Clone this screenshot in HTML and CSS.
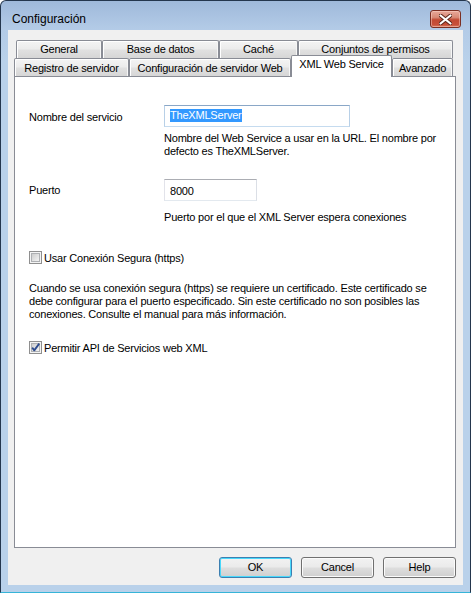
FILE: index.html
```html
<!DOCTYPE html>
<html lang="es">
<head>
<meta charset="utf-8">
<title>Configuración</title>
<link rel="stylesheet" href="styles.css">
</head>
<body>
<div class="window">
  <div class="titlebar">
    <span class="title">Configuración</span>
    <div class="close">
      <svg width="13" height="11" viewBox="0 0 13 11">
        <path d="M1.5 1.5 L11.5 9.5 M11.5 1.5 L1.5 9.5" stroke="#5a2418" stroke-width="4" stroke-linecap="round" fill="none"/>
        <path d="M1.5 1.5 L11.5 9.5 M11.5 1.5 L1.5 9.5" stroke="#ffffff" stroke-width="2.2" stroke-linecap="round" fill="none"/>
      </svg>
    </div>
  </div>
  <div class="client">
    <div class="tabs">
      <div class="tabrow back">
        <div class="tab t-general">General</div>
        <div class="tab t-base">Base de datos</div>
        <div class="tab t-cache">Caché</div>
        <div class="tab t-conj">Conjuntos de permisos</div>
      </div>
      <div class="tabrow front">
        <div class="tab t-reg">Registro de servidor</div>
        <div class="tab t-conf">Configuración de servidor Web</div>
        <div class="tab t-xml selected">XML Web Service</div>
        <div class="tab t-ava">Avanzado</div>
      </div>
    </div>
    <div class="panel">
      <div class="field f-name">
        <div class="label">Nombre del servicio</div>
        <div class="fcol">
          <div class="textbox focused tb-name"><span class="sel">TheXMLServer</span></div>
          <div class="desc d-name">Nombre del Web Service a usar en la URL. El nombre por<br>defecto es TheXMLServer.</div>
        </div>
      </div>
      <div class="field f-port">
        <div class="label">Puerto</div>
        <div class="fcol">
          <div class="textbox tb-port">8000</div>
          <div class="desc d-port">Puerto por el que el XML Server espera conexiones</div>
        </div>
      </div>
      <div class="check c-https">
        <svg class="cb" width="13" height="13" viewBox="0 0 13 13">
          <defs>
            <linearGradient id="cbg" x1="0" y1="0" x2="1" y2="1">
              <stop offset="0" stop-color="#cbcbcb"/>
              <stop offset="1" stop-color="#f6f6f6"/>
            </linearGradient>
          </defs>
          <rect x="0.5" y="0.5" width="12" height="12" fill="#f4f4f4" stroke="#8f8f8f"/>
          <rect x="2.5" y="2.5" width="8" height="8" fill="url(#cbg)" stroke="#aeb0b3"/>
        </svg>
        <span>Usar Conexión Segura (https)</span>
      </div>
      <p class="info">Cuando se usa conexión segura (https) se requiere un certificado. Este certificado se<br>debe configurar para el puerto especificado. Sin este certificado no son posibles las<br>conexiones. Consulte el manual para más información.</p>
      <div class="check c-api">
        <svg class="cb" width="13" height="13" viewBox="0 0 13 13">
          <defs>
            <linearGradient id="cbg2" x1="0" y1="0" x2="1" y2="1">
              <stop offset="0" stop-color="#cbcbcb"/>
              <stop offset="1" stop-color="#f6f6f6"/>
            </linearGradient>
          </defs>
          <rect x="0.5" y="0.5" width="12" height="12" fill="#f4f4f4" stroke="#8f8f8f"/>
          <rect x="2.5" y="2.5" width="8" height="8" fill="url(#cbg2)" stroke="#aeb0b3"/>
          <path d="M3.2 6.6 L5.3 9.4 L10.2 2.6" stroke="#2d4b8e" stroke-width="1.8" fill="none" stroke-linejoin="round"/>
        </svg>
        <span>Permitir API de Servicios web XML</span>
      </div>
    </div>
    <div class="buttons">
      <div class="btn default">OK</div>
      <div class="btn">Cancel</div>
      <div class="btn">Help</div>
    </div>
  </div>
</div>
</body>
</html>
```
FILE: styles.css
```css
* { box-sizing: border-box; }
html, body { margin: 0; padding: 0; }
body {
  width: 471px;
  height: 593px;
  overflow: hidden;
  background: #ffffff;
  font-family: "Liberation Sans", Arial, sans-serif;
  font-size: 11px;
  letter-spacing: -0.2px;
  color: #000000;
}
.window {
  width: 471px;
  height: 593px;
  border: 1px solid #24364d;
  border-bottom-color: #36b4d8;
  border-radius: 6px 6px 0 0;
  background: linear-gradient(to bottom, #9fb9da 0px, #b3cbe7 28px, #b9d1ea 60px, #b9d1ea 100%);
  padding: 0 7px 7px 7px;
  display: flex;
  flex-direction: column;
}
.titlebar {
  height: 29px;
  display: flex;
  align-items: flex-start;
  justify-content: space-between;
  padding-left: 4px;
}
.title {
  font-size: 12px;
  letter-spacing: 0;
  padding-top: 11px;
  line-height: 14px;
  color: #000;
}
.close {
  margin-top: 9px;
  margin-right: 2px;
  width: 31px;
  height: 18px;
  border: 1px solid #7b2f23;
  border-radius: 3px;
  background: linear-gradient(to bottom, #e8a899 0%, #d88a77 40%, #c24a33 55%, #c8503a 85%, #d87a5e 100%);
  box-shadow: inset 0 0 0 1px rgba(255,220,210,0.45);
  display: flex;
  align-items: center;
  justify-content: center;
}
.client {
  flex: 1;
  background: #f0f0f0;
  padding: 10px 7px 0 6px;
}
.tabs { width: 442px; }
.tabrow {
  display: flex;
  height: 18px;
}
.tabrow.back { padding-left: 2px; }
.tab {
  height: 18px;
  border: 1px solid #898c95;
  border-bottom: none;
  border-radius: 2px 2px 0 0;
  background: linear-gradient(to bottom, #f4f4f4 0%, #ececec 45%, #e0e0e0 55%, #d6d6d6 100%);
  box-shadow: inset 1px 1px 0 #ffffff, inset -1px 0 0 #f6f6f6;
  text-align: center;
  line-height: 13px;
  padding-top: 2px;
  white-space: nowrap;
}
.t-general { width: 86px; }
.t-base { width: 117px; }
.t-cache { width: 79px; }
.t-conj { width: 155px; }
.t-reg { width: 115px; }
.t-conf { width: 162px; }
.t-xml { width: 101px; }
.t-ava { width: 61px; }
.tab.selected {
  height: 22px;
  margin-top: -3px;
  background: #ffffff;
  box-shadow: none;
  position: relative;
  z-index: 2;
  padding-top: 2px;
}
.tabrow.front .tab:not(.selected) { padding-top: 3px; }
.panel {
  position: relative;
  z-index: 1;
  width: 442px;
  height: 472px;
  border: 1px solid #898c95;
  background: #ffffff;
  padding: 28px 0 0 14px;
}
.field { display: flex; }
.label {
  width: 135px;
  line-height: 13px;
  padding-top: 6px;
}
.fcol { display: flex; flex-direction: column; }
.textbox {
  height: 22px;
  border: 1px solid #abadb3;
  border-left-color: #e2e3ea;
  border-right-color: #dbdfe6;
  border-bottom-color: #e3e9ef;
  background: #fff;
  padding: 3px 0 0 5px;
  line-height: 13px;
}
.textbox.focused {
  border-color: #8aa7c7 #b8d0e7 #c5dbef #b8d0e7;
}
.tb-name { width: 186px; }
.tb-port { width: 93px; padding-top: 5px; }
.sel {
  background: #3399ff;
  color: #ffffff;
  display: inline-block;
  line-height: 13px;
}
.desc { line-height: 13px; }
.d-name { margin-top: 5px; }
.d-port { margin-top: 10px; }
.f-port { margin-top: 21px; }
.f-port .label { padding-top: 5px; }
.check {
  display: flex;
  align-items: center;
  height: 13px;
  line-height: 13px;
}
.check .cb { flex: none; margin-right: 2px; }
.check span { padding-top: 1px; }
.c-https { margin-top: 27px; }
.info {
  margin: 18px 0 0 0;
  line-height: 12.8px;
}
.c-api { margin-top: 21px; }
.buttons {
  display: flex;
  justify-content: flex-end;
  gap: 9px;
  width: 442px;
  margin-top: 9px;
}
.btn {
  width: 73px;
  height: 21px;
  border: 1px solid #707070;
  border-radius: 3px;
  background: linear-gradient(to bottom, #f2f2f2 0%, #ebebeb 45%, #dddddd 55%, #cfcfcf 100%);
  box-shadow: inset 0 0 0 1px #fbfbfb;
  text-align: center;
  line-height: 13px;
  padding-top: 3px;
}
.btn.default {
  border-color: #3c7fb1;
  box-shadow: inset 0 0 0 1px #48d8fb;
}
```
